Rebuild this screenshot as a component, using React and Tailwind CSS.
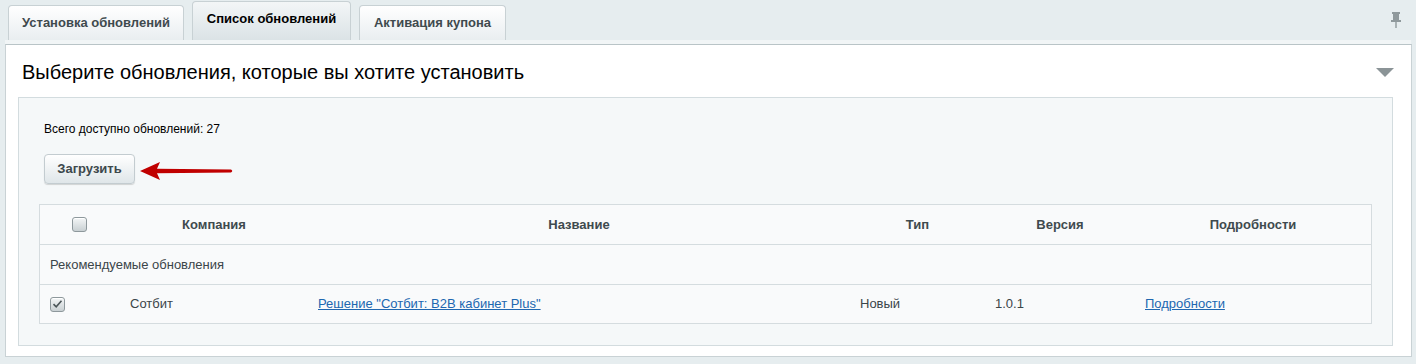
import React from "react";

function Checkbox({ checked }) {
  return (
    <div className="w-[15px] h-[15px] rounded-[3px] border border-[#8e989c] bg-gradient-to-b from-[#f4f6f7] to-[#c9d0d3] shadow-[inset_0_1px_0_#fff] flex items-center justify-center">
      {checked && (
        <svg width="11" height="10" viewBox="0 0 11 10">
          <path d="M1.5 5.2 L4.2 7.8 L9.5 1.8" fill="none" stroke="#4b5558" strokeWidth="1.6" />
        </svg>
      )}
    </div>
  );
}

export default function App() {
  const cols = "grid grid-cols-[80px_188px_542px_135px_150px_1fr]";
  return (
    <div className="h-[364px] bg-[#e6edef] font-['Liberation_Sans',Arial,sans-serif] overflow-hidden">
      <div className="flex items-end h-[40px] pl-[8px] gap-[8px] pr-[14px]">
        <div className="w-[176px] h-[35px] rounded-t-[4px] border border-b-0 border-[#c8d1d4] bg-gradient-to-b from-white to-[#e9eef0] flex items-center justify-center text-[13px] font-bold text-[#3f4a4e]">
          Установка обновлений
        </div>
        <div className="w-[159px] h-[39px] rounded-t-[4px] border border-b-0 border-[#c8d1d4] bg-gradient-to-b from-[#f3f6f7] to-[#dbe3e6] flex items-center justify-center text-[13px] font-bold text-black pb-[4px]">
          Список обновлений
        </div>
        <div className="w-[147px] h-[35px] rounded-t-[4px] border border-b-0 border-[#c8d1d4] bg-gradient-to-b from-white to-[#e9eef0] flex items-center justify-center text-[13px] font-bold text-[#3f4a4e]">
          Активация купона
        </div>
        <div className="ml-auto self-start mt-[11px]">
          <svg width="12" height="18" viewBox="0 0 12 18">
            <rect x="2" y="1" width="8" height="2" fill="#8f999c" />
            <rect x="3" y="3" width="6" height="6" fill="#8f999c" />
            <rect x="1" y="9" width="10" height="2" fill="#8f999c" />
            <rect x="5.3" y="11" width="1.4" height="6" fill="#8f999c" />
          </svg>
        </div>
      </div>
      <div className="h-[4px] bg-[#f1f5f6] mx-[5px]" />
      <div className="ml-[5px] mr-[4px] h-[313px] bg-white border border-[#c9d2d5] border-t-[#b9c4c7]">
        <div className="h-[52px] flex items-center justify-between pl-[16px] pr-[17px]">
          <div className="text-[20px] text-black leading-[24px] pt-[2px]">
            Выберите обновления, которые вы хотите установить
          </div>
          <svg width="18" height="9" viewBox="0 0 18 9" className="mt-[2px]">
            <polygon points="0,0 18,0 9,9" fill="#8b9497" />
          </svg>
        </div>
        <div className="ml-[12px] mr-[18px] h-[249px] bg-[#f5f8f9] border border-[#d3dcdf] px-[20px] pt-[23px]">
          <div className="pl-[5px] text-[12px] leading-[16px] text-black">Всего доступно обновлений: 27</div>
          <div className="pl-[5px] mt-[17px] flex items-center">
            <div className="w-[91px] h-[30px] rounded-[4px] border border-[#c3ccd0] bg-gradient-to-b from-[#ffffff] to-[#dfe6e9] shadow-[0_1px_1px_rgba(0,0,0,0.15)] flex items-center justify-center text-[13px] font-bold text-[#3d484c]">
              Загрузить
            </div>
            <svg width="96" height="22" viewBox="0 0 96 22" className="ml-[3px] mt-[3px]">
              <path d="M2 11 L22 2 L19 8.8 L93 9.5 Q95.5 11 93 12.5 L19 13.2 L22 20 Z" fill="#c00000" />
            </svg>
          </div>
          <div className="mt-[20px] border border-[#d5dcdf] bg-[#f9fafb] text-[13px] text-[#3b4549]">
            <div className={cols + " h-[39px] items-center font-bold text-[#3f4a4e]"}>
              <div className="pl-[32px]"><Checkbox /></div>
              <div className="text-center">Компания</div>
              <div className="text-center">Название</div>
              <div className="text-center">Тип</div>
              <div className="text-center">Версия</div>
              <div className="text-center">Подробности</div>
            </div>
            <div className="h-[40px] border-t border-[#d5dcdf] flex items-center pl-[10px]">
              Рекомендуемые обновления
            </div>
            <div className={cols + " h-[39px] items-center border-t border-[#d5dcdf]"}>
              <div className="pl-[10px]"><Checkbox checked /></div>
              <div className="pl-[10px]">Сотбит</div>
              <div className="pl-[10px]"><span className="text-[#2067b0] underline">Решение "Сотбит: B2B кабинет Plus"</span></div>
              <div className="pl-[10px]">Новый</div>
              <div className="pl-[10px]">1.0.1</div>
              <div className="pl-[10px]"><span className="text-[#2067b0] underline">Подробности</span></div>
            </div>
          </div>
        </div>
      </div>
    </div>
  );
}
